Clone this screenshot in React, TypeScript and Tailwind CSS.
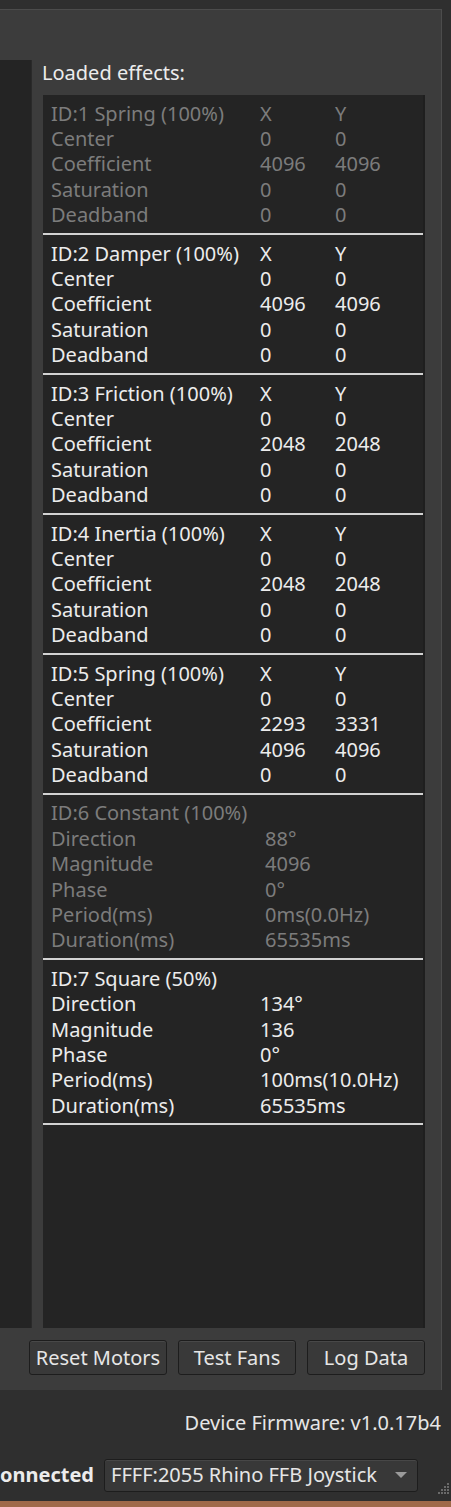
import React from "react";

type Row = { label: string; x: string; y?: string };
type Effect = { title: string; active: boolean; cond: boolean; rows: Row[]; valCol?: number };

const effects: Effect[] = [
  {
    title: "ID:1 Spring (100%)",
    active: false,
    cond: true,
    rows: [
      { label: "Center", x: "0", y: "0" },
      { label: "Coefficient", x: "4096", y: "4096" },
      { label: "Saturation", x: "0", y: "0" },
      { label: "Deadband", x: "0", y: "0" },
    ],
  },
  {
    title: "ID:2 Damper (100%)",
    active: true,
    cond: true,
    rows: [
      { label: "Center", x: "0", y: "0" },
      { label: "Coefficient", x: "4096", y: "4096" },
      { label: "Saturation", x: "0", y: "0" },
      { label: "Deadband", x: "0", y: "0" },
    ],
  },
  {
    title: "ID:3 Friction (100%)",
    active: true,
    cond: true,
    rows: [
      { label: "Center", x: "0", y: "0" },
      { label: "Coefficient", x: "2048", y: "2048" },
      { label: "Saturation", x: "0", y: "0" },
      { label: "Deadband", x: "0", y: "0" },
    ],
  },
  {
    title: "ID:4 Inertia (100%)",
    active: true,
    cond: true,
    rows: [
      { label: "Center", x: "0", y: "0" },
      { label: "Coefficient", x: "2048", y: "2048" },
      { label: "Saturation", x: "0", y: "0" },
      { label: "Deadband", x: "0", y: "0" },
    ],
  },
  {
    title: "ID:5 Spring (100%)",
    active: true,
    cond: true,
    rows: [
      { label: "Center", x: "0", y: "0" },
      { label: "Coefficient", x: "2293", y: "3331" },
      { label: "Saturation", x: "4096", y: "4096" },
      { label: "Deadband", x: "0", y: "0" },
    ],
  },
  {
    title: "ID:6 Constant (100%)",
    active: false,
    cond: false,
    valCol: 214,
    rows: [
      { label: "Direction", x: "88°" },
      { label: "Magnitude", x: "4096" },
      { label: "Phase", x: "0°" },
      { label: "Period(ms)", x: "0ms(0.0Hz)" },
      { label: "Duration(ms)", x: "65535ms" },
    ],
  },
  {
    title: "ID:7 Square (50%)",
    active: true,
    cond: false,
    valCol: 209,
    rows: [
      { label: "Direction", x: "134°" },
      { label: "Magnitude", x: "136" },
      { label: "Phase", x: "0°" },
      { label: "Period(ms)", x: "100ms(10.0Hz)" },
      { label: "Duration(ms)", x: "65535ms" },
    ],
  },
];

const EffectBlock = ({ fx }: { fx: Effect }) => {
  const color = fx.active ? "text-[#ececec]" : "text-[#7c7c7c]";
  return (
    <div className="flex flex-col">
      <div className={`pt-[6px] pb-[5px] pl-[8px] ${color}`}>
        {fx.cond ? (
          <>
            <div className="grid grid-cols-[209px_75px_1fr] h-[25.4px] items-center">
              <span className="whitespace-nowrap">{fx.title}</span>
              <span>X</span>
              <span>Y</span>
            </div>
            {fx.rows.map((r) => (
              <div key={r.label} className="grid grid-cols-[209px_75px_1fr] h-[25.4px] items-center">
                <span>{r.label}</span>
                <span>{r.x}</span>
                <span>{r.y}</span>
              </div>
            ))}
          </>
        ) : (
          <>
            <div className="h-[25.4px] flex items-center whitespace-nowrap">{fx.title}</div>
            {fx.rows.map((r) => (
              <div key={r.label} className="flex h-[25.4px] items-center">
                <span className={fx.valCol === 214 ? "w-[214px]" : "w-[209px]"}>{r.label}</span>
                <span className="whitespace-nowrap">{r.x}</span>
              </div>
            ))}
          </>
        )}
      </div>
      <div className="h-[2px] bg-[#d2d2d2]" />
    </div>
  );
};

const Button = ({ label, w }: { label: string; w: string }) => (
  <button
    className={`${w} h-[35px] rounded-[3px] border border-[#1d1d1d] bg-[#393939] text-[#e6e6e6] shadow-[inset_0_1px_0_#484848] flex items-center justify-center whitespace-nowrap`}
  >
    {label}
  </button>
);

export default function App() {
  return (
    <div
      className="w-[451px] h-[1507px] bg-[#2f2f2f] flex flex-col overflow-hidden text-[20px] leading-none"
      style={{ fontFamily: '"Noto Sans", "DejaVu Sans", sans-serif' }}
    >
      {/* top strip */}
      <div className="h-[9px] shrink-0" />

      {/* group box */}
      <div className="w-[442px] h-[1381px] shrink-0 bg-[#3c3c3c] border-t border-r border-[#4c4c4c] flex flex-col">
        <div className="flex mt-[50px]">
          <div className="w-[32px] h-[1268px] bg-[#242424] border-r border-[#2a2a2a]" />
          <div className="ml-[11px] w-[382px] flex flex-col">
            <div className="h-[35px] pb-[10px] flex items-center text-[#ececec] -ml-[1px] whitespace-nowrap">
              Loaded effects:
            </div>
            <div className="h-[1233px] bg-[#242424] border-r-2 border-[#1f1f1f] flex flex-col">
              {effects.map((fx) => (
                <EffectBlock key={fx.title} fx={fx} />
              ))}
            </div>
          </div>
        </div>

        {/* buttons */}
        <div className="flex gap-[11px] mt-[12px] ml-[29px]">
          <Button label="Reset Motors" w="w-[138px]" />
          <Button label="Test Fans" w="w-[118px]" />
          <Button label="Log Data" w="w-[118px]" />
        </div>
      </div>

      {/* firmware */}
      <div className="h-[65px] shrink-0 flex items-center justify-end pr-[10px] text-[#e6e6e6] whitespace-nowrap">
        Device Firmware: v1.0.17b4
      </div>

      {/* connection row */}
      <div className="flex items-center h-[40px] shrink-0 relative">
        <div className="w-[94px] flex justify-end whitespace-nowrap font-bold text-[#ececec]">Connected</div>
        <div className="ml-[10px] w-[314px] h-[33px] rounded-[3px] border border-[#1d1d1d] bg-[#383838] shadow-[inset_0_1px_0_#474747] flex items-center pl-[6px] pr-[10px] text-[#e6e6e6]">
          <span className="flex-1 whitespace-nowrap">FFFF:2055 Rhino FFB Joystick</span>
          <svg width="12" height="7" viewBox="0 0 12 7">
            <path d="M0 0H12L6 6Z" fill="#9a9a9a" />
          </svg>
        </div>
        <svg className="absolute right-[1px] bottom-[1px]" width="12" height="12" viewBox="0 0 12 12">
          {[
            [10, 2],
            [7, 5],
            [10, 5],
            [4, 8],
            [7, 8],
            [10, 8],
            [1, 11],
            [4, 11],
            [7, 11],
            [10, 11],
          ].map(([cx, cy]) => (
            <rect key={`${cx}-${cy}`} x={cx - 1} y={cy - 1} width="2" height="2" fill="#6a6a6a" />
          ))}
        </svg>
      </div>

      <div className="flex-1" />
      <div className="h-[6px] shrink-0 bg-[#a0694a]" />
    </div>
  );
}
